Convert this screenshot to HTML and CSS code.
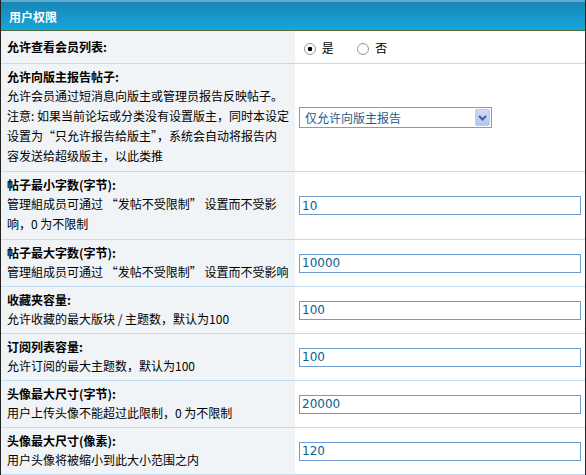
FILE: index.html
```html
<!DOCTYPE html>
<html lang="zh-CN">
<head>
  <meta charset="UTF-8">
  <title>用户权限</title>
  <link rel="stylesheet" href="styles.css">
</head>
<body>

<table class="perm-table">
  <tr>
    <th colspan="2">用户权限</th>
  </tr>

  <tr>
    <td class="label"><strong>允许查看会员列表:</strong></td>
    <td class="value radio-cell">
      <label class="radio"><input type="radio" name="memberlist" checked> 是</label>
      <label class="radio"><input type="radio" name="memberlist"> 否</label>
    </td>
  </tr>

  <tr>
    <td class="label tall">
      <strong>允许向版主报告帖子:</strong>
      <div class="desc">允许会员通过短消息向版主或管理员报告反映帖子。<br>注意: 如果当前论坛或分类没有设置版主，同时本设定<br>设置为“只允许报告给版主”，系统会自动将报告内<br>容发送给超级版主，以此类推</div>
    </td>
    <td class="value">
      <span class="select-wrap">
        <select class="select">
          <option>仅允许向版主报告</option>
          <option>允许向版主或管理员报告</option>
        </select>
        <span class="select-arrow">
          <svg width="9" height="6" viewBox="0 0 9 6"><path d="M1 1 L4.5 4.5 L8 1" fill="none" stroke="#4a5f86" stroke-width="2"/></svg>
        </span>
      </span>
    </td>
  </tr>

  <tr>
    <td class="label tall">
      <strong>帖子最小字数(字节):</strong>
      <div class="desc">管理組成员可通过 “发帖不受限制” 设置而不受影<br>响，0 为不限制</div>
    </td>
    <td class="value"><input class="text-input" type="text" value="10"></td>
  </tr>

  <tr>
    <td class="label">
      <strong>帖子最大字数(字节):</strong>
      <div class="desc">管理組成员可通过 “发帖不受限制” 设置而不受影响</div>
    </td>
    <td class="value"><input class="text-input" type="text" value="10000"></td>
  </tr>

  <tr>
    <td class="label">
      <strong>收藏夹容量:</strong>
      <div class="desc">允许收藏的最大版块 / 主题数，默认为100</div>
    </td>
    <td class="value"><input class="text-input" type="text" value="100"></td>
  </tr>

  <tr>
    <td class="label">
      <strong>订阅列表容量:</strong>
      <div class="desc">允许订阅的最大主题数，默认为100</div>
    </td>
    <td class="value"><input class="text-input" type="text" value="100"></td>
  </tr>

  <tr>
    <td class="label">
      <strong>头像最大尺寸(字节):</strong>
      <div class="desc">用户上传头像不能超过此限制，0 为不限制</div>
    </td>
    <td class="value"><input class="text-input" type="text" value="20000"></td>
  </tr>

  <tr>
    <td class="label">
      <strong>头像最大尺寸(像素):</strong>
      <div class="desc">用户头像将被缩小到此大小范围之内</div>
    </td>
    <td class="value"><input class="text-input" type="text" value="120"></td>
  </tr>
</table>

</body>
</html>
```

FILE: styles.css
```css
body {
  margin: 0;
  font-family: "Noto Sans CJK SC", sans-serif;
  font-size: 12px;
  color: #000;
  background: #fff;
}

.perm-table {
  width: 586px;
  border-collapse: separate;
  border-spacing: 0;
  border-left: 1px solid #222;
  border-right: 1px solid #222;
}

.perm-table th {
  height: 28px;
  padding: 0 8px;
  text-align: left;
  font-size: 12px;
  font-weight: bold;
  color: #fff;
  background: linear-gradient(#1886b5, #16a6dc);
  border-top: 2px solid #5faad0;
  border-bottom: 1px solid #4d6a3a;
}

.label {
  width: 282px;
  padding: 4px 6px;
  background: #f0f4f7;
  border-bottom: 1px solid #c2dcef;
  vertical-align: middle;
}

.label.tall {
  padding-bottom: 5px;
}

.label strong {
  display: block;
  line-height: 18px;
}

.desc {
  line-height: 20px;
  white-space: nowrap;
}

.value {
  padding: 4px 4px;
  background: #fff;
  border-bottom: 1px solid #c2dcef;
  vertical-align: middle;
}

.radio-cell {
  height: 24px;
}

.radio {
  margin-right: 16px;
}

.radio input {
  appearance: none;
  -webkit-appearance: none;
  width: 12px;
  height: 12px;
  margin: 0 3px 0 5px;
  border: 1px solid #9c9a94;
  border-radius: 50%;
  background: radial-gradient(circle, #fff 60%, #e4e2dc 100%);
  vertical-align: -2px;
}

.radio input:checked {
  background: radial-gradient(circle, #000 0, #000 2px, #fff 2.6px, #fff 60%, #e4e2dc 100%);
}

.text-input {
  box-sizing: border-box;
  width: 282px;
  height: 19px;
  padding: 0 2px;
  border: 1px solid #6b9bcf;
  font-family: "DejaVu Sans", sans-serif;
  font-size: 12px;
  color: #0b5e92;
  outline: none;
}

.select-wrap {
  position: relative;
  display: inline-block;
}

.select {
  box-sizing: border-box;
  width: 193px;
  height: 21px;
  padding: 0 20px 0 5px;
  border: 1px solid #7f9db9;
  border-radius: 0;
  background: #fff;
  font-family: "Noto Sans CJK SC", sans-serif;
  font-size: 12px;
  color: #1b5c8c;
  appearance: none;
  -webkit-appearance: none;
  display: block;
}

.select-arrow {
  position: absolute;
  top: 2px;
  right: 2px;
  width: 15px;
  height: 17px;
  box-sizing: border-box;
  border: 1px solid #b9cbf2;
  border-radius: 2px;
  background: linear-gradient(#cbd9fc, #b3c7f6);
  display: flex;
  align-items: center;
  justify-content: center;
  pointer-events: none;
}
```
